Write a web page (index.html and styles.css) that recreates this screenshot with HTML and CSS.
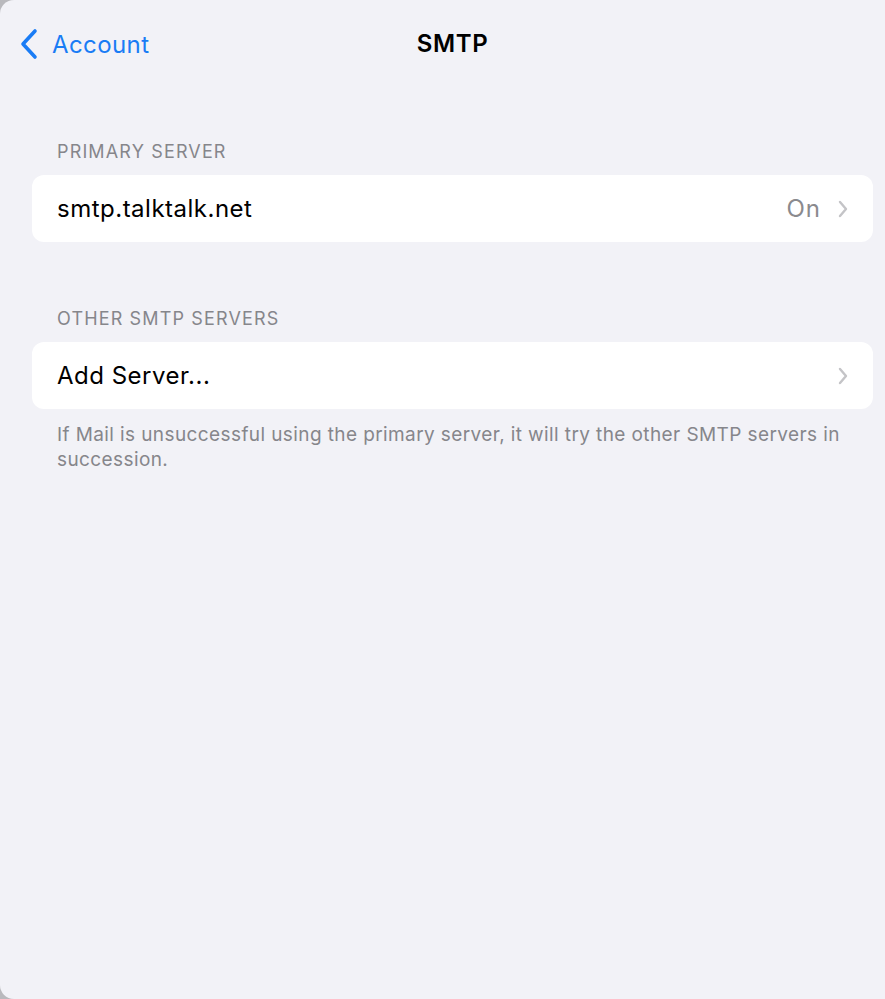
FILE: index.html
```html
<!DOCTYPE html>
<html lang="en">
<head>
<meta charset="utf-8">
<title>SMTP</title>
<link rel="stylesheet" href="styles.css">
</head>
<body>
<div class="screen">
  <header class="navbar">
    <a class="back" href="#">
      <svg class="back-icon" width="20" height="32" viewBox="0 0 20 32"><path d="M16 3 L4 16 L16 29" fill="none" stroke="#1a7cf5" stroke-width="3.6" stroke-linecap="round" stroke-linejoin="round"/></svg>
      <span>Account</span>
    </a>
    <h1 class="title">SMTP</h1>
  </header>

  <section class="group first">
    <div class="group-header">PRIMARY SERVER</div>
    <div class="card">
      <div class="row">
        <span class="row-label">smtp.talktalk.net</span>
        <span class="row-value">On</span>
        <svg class="chev" width="12" height="20" viewBox="0 0 12 20"><path d="M3 3 L9 10 L3 17" fill="none" stroke="#c4c4c7" stroke-width="2.4" stroke-linecap="round" stroke-linejoin="round"/></svg>
      </div>
    </div>
  </section>

  <section class="group">
    <div class="group-header">OTHER SMTP SERVERS</div>
    <div class="card">
      <div class="row">
        <span class="row-label">Add Server...</span>
        <svg class="chev" width="12" height="20" viewBox="0 0 12 20"><path d="M3 3 L9 10 L3 17" fill="none" stroke="#c4c4c7" stroke-width="2.4" stroke-linecap="round" stroke-linejoin="round"/></svg>
      </div>
    </div>
    <p class="group-footer">If Mail is unsuccessful using the primary server, it will try the other SMTP servers in succession.</p>
  </section>
</div>
</body>
</html>
```

FILE: styles.css
```css
html, body {
  margin: 0;
  padding: 0;
  height: 100%;
}
body {
  background: #b9b9bd;
  font-family: Inter, "Noto Sans", "Liberation Sans", sans-serif;
}
.screen {
  height: 999px;
  background: #f2f2f7;
  border-top-left-radius: 14px;
  border-bottom-left-radius: 14px;
  overflow: hidden;
  box-sizing: border-box;
  padding: 0 12px 0 32px;
}
.navbar {
  display: flex;
  align-items: center;
  justify-content: center;
  height: 88px;
  position: relative;
  margin-left: -32px;
  margin-right: -12px;
}
.back {
  position: absolute;
  left: 19px;
  top: 28px;
  display: flex;
  align-items: center;
  gap: 13px;
  color: #1a7cf5;
  text-decoration: none;
  font-size: 24px;
  letter-spacing: 0.4px;
}
.title {
  margin: 0;
  font-size: 24px;
  font-weight: 600;
  color: #000;
  letter-spacing: 0.6px;
  padding-left: 20px;
  margin-top: -1px;
}
.group.first {
  margin-top: 53px;
}
.group {
  margin-top: 66px;
}
.group-header {
  font-size: 18px;
  color: #86868b;
  padding-left: 25px;
  line-height: 22px;
  margin-bottom: 12px;
  letter-spacing: 1.15px;
}
.card {
  background: #fff;
  border-radius: 12px;
}
.row {
  display: flex;
  align-items: center;
  height: 67px;
  padding: 0 24px 0 25px;
}
.row-label {
  flex: 1;
  font-size: 24px;
  color: #000;
  letter-spacing: 0.5px;
}
.row-value {
  font-size: 24px;
  color: #8a8a8e;
  margin-right: 16px;
  letter-spacing: 1px;
}
.chev {
  display: block;
}
.group-footer {
  margin: 13px 0 0;
  padding: 0 25px;
  font-size: 19px;
  line-height: 25px;
  color: #86868b;
  letter-spacing: 0.4px;
}
```
